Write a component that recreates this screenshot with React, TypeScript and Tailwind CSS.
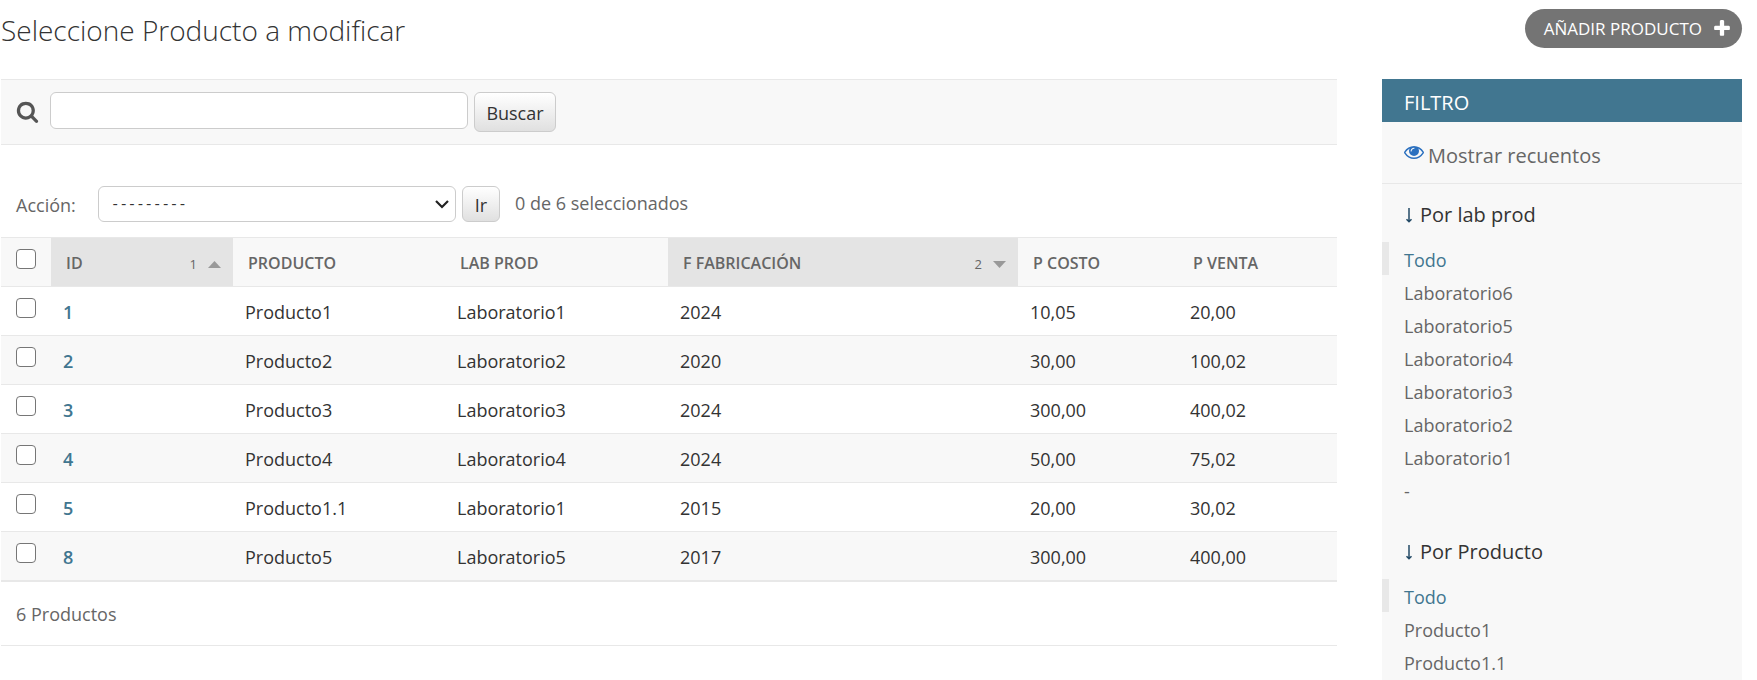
import React from "react";

type Product = {
  id: number;
  name: string;
  lab: string;
  year: string;
  cost: string;
  price: string;
};

const products: Product[] = [
  { id: 1, name: "Producto1", lab: "Laboratorio1", year: "2024", cost: "10,05", price: "20,00" },
  { id: 2, name: "Producto2", lab: "Laboratorio2", year: "2020", cost: "30,00", price: "100,02" },
  { id: 3, name: "Producto3", lab: "Laboratorio3", year: "2024", cost: "300,00", price: "400,02" },
  { id: 4, name: "Producto4", lab: "Laboratorio4", year: "2024", cost: "50,00", price: "75,02" },
  { id: 5, name: "Producto1.1", lab: "Laboratorio1", year: "2015", cost: "20,00", price: "30,02" },
  { id: 8, name: "Producto5", lab: "Laboratorio5", year: "2017", cost: "300,00", price: "400,00" },
];

const labOptions = [
  "Todo",
  "Laboratorio6",
  "Laboratorio5",
  "Laboratorio4",
  "Laboratorio3",
  "Laboratorio2",
  "Laboratorio1",
  "-",
];
const productOptions = ["Todo", "Producto1", "Producto1.1"];

function SearchIcon() {
  return (
    <svg viewBox="0 0 1792 1792" className="size-[23px] fill-[#555]" aria-hidden="true">
      <path d="M1216 832q0-185-131.5-316.5t-316.5-131.5-316.5 131.5-131.5 316.5 131.5 316.5 316.5 131.5 316.5-131.5 131.5-316.5zm512 832q0 52-38 90t-90 38q-54 0-90-38l-343-342q-179 124-399 124-143 0-273.5-55.5t-225-150-150-225-55.5-273.5 55.5-273.5 150-225 225-150 273.5-55.5 273.5 55.5 225 150 150 225 55.5 273.5q0 220-124 399l343 343q37 37 37 90z" />
    </svg>
  );
}

function PlusIcon() {
  return (
    <svg viewBox="0 0 1792 1792" className="mb-[2px] size-5 fill-white" aria-hidden="true">
      <path d="M1600 796v192q0 40-28 68t-68 28h-416v416q0 40-28 68t-68 28h-192q-40 0-68-28t-28-68v-416h-416q-40 0-68-28t-28-68v-192q0-40 28-68t68-28h416v-416q0-40 28-68t68-28h192q40 0 68 28t28 68v416h416q40 0 68 28t28 68z" />
    </svg>
  );
}

function EyeIcon() {
  return (
    <svg viewBox="0 384 1792 1152" className="mb-[6px] h-[13px] w-5 fill-[#2b70bf]" aria-hidden="true">
      <path d="M1664 960q-152-236-381-353 61 104 61 225 0 185-131.5 316.5t-316.5 131.5-316.5-131.5-131.5-316.5q0-121 61-225-229 117-381 353 133 205 333.5 326.5t434.5 121.5 434.5-121.5 333.5-326.5zm-720-384q0-20-14-34t-34-14q-125 0-214.5 89.5t-89.5 214.5q0 20 14 34t34 14 34-14 14-34q0-86 61-147t147-61q20 0 34-14t14-34zm848 384q0 34-20 69-140 230-376.5 368.5t-499.5 138.5-499.5-139-376.5-368q-20-35-20-69t20-69q140-229 376.5-368t499.5-139 499.5 139 376.5 368q20 35 20 69z" />
    </svg>
  );
}

function DownArrow() {
  return (
    <svg viewBox="0 0 8 15" className="h-[15px] w-2" fill="none" stroke="#234a66" strokeWidth="1.5" aria-hidden="true">
      <path d="M4 0v13.5M1.500 11.300l2.500 2.500 2.500-2.500" />
    </svg>
  );
}

function Checkbox({ label }: { label: string }) {
  return (
    <input
      type="checkbox"
      aria-label={label}
      className="block size-5 appearance-none rounded-[4px] border border-[#767676] bg-white checked:bg-[#417690]"
    />
  );
}

function SortHeader({ label, order, direction }: { label: string; order: number; direction: "up" | "down" }) {
  return (
    <th scope="col" className="bg-[#e4e4e4] pl-[15px] pr-3 pt-[2px] text-left font-semibold">
      <div className="flex items-center justify-between">
        <a href="#ordenar">{label}</a>
        <span className="flex items-center gap-[11px] pt-[2px] text-[13px] font-normal leading-4">
          {order}
          <svg viewBox="0 0 13 7" className="h-[7px] w-[13px] fill-[#999]" aria-hidden="true">
            {direction === "up" ? <path d="M6.500 0L13 7H0z" /> : <path d="M0 0h13L6.500 7z" />}
          </svg>
        </span>
      </div>
    </th>
  );
}

function PlainHeader({ label }: { label: string }) {
  return (
    <th scope="col" className="pl-[15px] pt-[2px] text-left font-semibold">
      <a href="#ordenar">{label}</a>
    </th>
  );
}

function FilterGroup({ title, options }: { title: string; options: string[] }) {
  return (
    <details open className="pb-[15px]">
      <summary className="flex h-[58px] cursor-pointer list-none items-center gap-[7px] pl-[23px] pt-1 text-[20px] text-[#333]">
        <DownArrow />
        {title}
      </summary>
      <ul>
        {options.map((option, index) => (
          <li
            key={option}
            className={
              index === 0
                ? "h-[33px] border-l-[7px] border-[#e8e8e8] pl-[15px] text-[#417690]"
                : "h-[33px] pl-[22px] text-[#666]"
            }
          >
            <a href="#filtro" className="block pt-[2px] leading-[33px]">
              {option}
            </a>
          </li>
        ))}
      </ul>
    </details>
  );
}

const buttonClass =
  "rounded-[6px] border border-[#ccc] bg-linear-to-b from-white to-[#e0e0e0] pt-[2px] text-[#333]";

const cellClass = "pl-3 pt-[2px]";

export default function App() {
  return (
    <div className="flex h-screen flex-col overflow-hidden bg-white pl-px pr-[15px] font-['Open_Sans','Noto_Sans',sans-serif] text-[18px] text-[#333]">
      <header className="flex h-[79px] shrink-0 items-start justify-between pt-[9px]">
        <h1 className="text-[28px] font-light leading-[43px]">Seleccione Producto a modificar</h1>
        <a
          href="#nuevo"
          className="flex h-[39px] items-center gap-[10px] rounded-full bg-[#747474] pl-[19px] pr-[10px] text-[17px] uppercase text-white"
        >
          Añadir Producto
          <PlusIcon />
        </a>
      </header>

      <div className="flex grow gap-[45px]">
        <main className="min-w-0 grow">
          <form
            role="search"
            onSubmit={(e) => e.preventDefault()}
            className="flex h-[66px] items-start border-y border-[#e8e8e8] bg-[#f8f8f8] pl-[15px] pt-3"
          >
            <label htmlFor="searchbar" className="mr-[11px] pt-2" aria-label="Buscar productos">
              <SearchIcon />
            </label>
            <input
              id="searchbar"
              type="text"
              className="mr-[6px] h-[37px] w-[418px] rounded-[6px] border border-[#ccc] bg-white px-2"
            />
            <button type="submit" className={`h-10 w-[82px] ${buttonClass}`}>
              Buscar
            </button>
          </form>

          <form onSubmit={(e) => e.preventDefault()}>
            <div className="flex h-[92px] items-center pl-[15px] pt-[26px]">
              <div className="flex w-[82px] items-center">
                <label htmlFor="action" className="pt-[2px] text-[#666]">
                  Acción:
                </label>
              </div>
              <div className="relative">
                <select
                  id="action"
                  className="block h-9 w-[358px] appearance-none rounded-[6px] border border-[#ccc] bg-white pl-3 pt-[2px] font-['Liberation_Mono',monospace] text-[14px] text-[#333]"
                >
                  <option>---------</option>
                </select>
                <svg
                  viewBox="0 0 14 9"
                  className="pointer-events-none absolute right-[7px] top-[14px] h-[9px] w-[14px]"
                  fill="none"
                  stroke="#222"
                  strokeWidth="2.2"
                  aria-hidden="true"
                >
                  <path d="M1 1l6 6 6-6" />
                </svg>
              </div>
              <button type="submit" className={`ml-[6px] h-9 w-[38px] ${buttonClass}`}>
                Ir
              </button>
              <span className="ml-[15px] pb-[2px] text-[#666]">0 de 6 seleccionados</span>
            </div>

            <table className="w-full table-fixed border-collapse">
              <colgroup>
                <col className="w-[50px]" />
                <col className="w-[182px]" />
                <col className="w-[212px]" />
                <col className="w-[223px]" />
                <col className="w-[350px]" />
                <col className="w-[160px]" />
                <col />
              </colgroup>
              <thead>
                <tr className="h-[49px] border-y border-[#e8e8e8] bg-[#f8f8f8] text-[16px] uppercase text-[#666]">
                  <th scope="col" className="pb-[6px] pl-[15px]">
                    <Checkbox label="Seleccionar todos" />
                  </th>
                  <SortHeader label="ID" order={1} direction="up" />
                  <PlainHeader label="Producto" />
                  <PlainHeader label="Lab prod" />
                  <SortHeader label="F fabricación" order={2} direction="down" />
                  <PlainHeader label="P costo" />
                  <PlainHeader label="P venta" />
                </tr>
              </thead>
              <tbody>
                {products.map((p) => (
                  <tr key={p.id} className="h-[49px] border-b border-[#e8e8e8] even:bg-[#f8f8f8]">
                    <td className="pb-[6px] pl-[15px]">
                      <Checkbox label={`Seleccionar ${p.name}`} />
                    </td>
                    <th scope="row" className={`${cellClass} text-left font-semibold text-[#417690]`}>
                      <a href="#producto">{p.id}</a>
                    </th>
                    <td className={cellClass}>{p.name}</td>
                    <td className={cellClass}>{p.lab}</td>
                    <td className={cellClass}>{p.year}</td>
                    <td className={cellClass}>{p.cost}</td>
                    <td className={cellClass}>{p.price}</td>
                  </tr>
                ))}
              </tbody>
            </table>
            <p className="flex h-[65px] items-center border-y border-[#e8e8e8] pl-[15px] pt-[2px] text-[#666]">
              6 Productos
            </p>
          </form>
        </main>

        <aside className="w-[360px] shrink-0 bg-[#f8f8f8]">
          <h2 className="flex h-[43px] items-center bg-[#417690] pl-[22px] pt-1 text-[20px] uppercase text-white">
            Filtro
          </h2>
          <div className="flex h-[62px] items-center border-b border-[#e8e8e8] pl-[22px] pt-[6px] text-[20px] text-[#666]">
            <a href="#recuentos" className="flex items-center gap-1">
              <EyeIcon />
              Mostrar recuentos
            </a>
          </div>
          <FilterGroup title="Por lab prod" options={labOptions} />
          <FilterGroup title="Por Producto" options={productOptions} />
        </aside>
      </div>
    </div>
  );
}
